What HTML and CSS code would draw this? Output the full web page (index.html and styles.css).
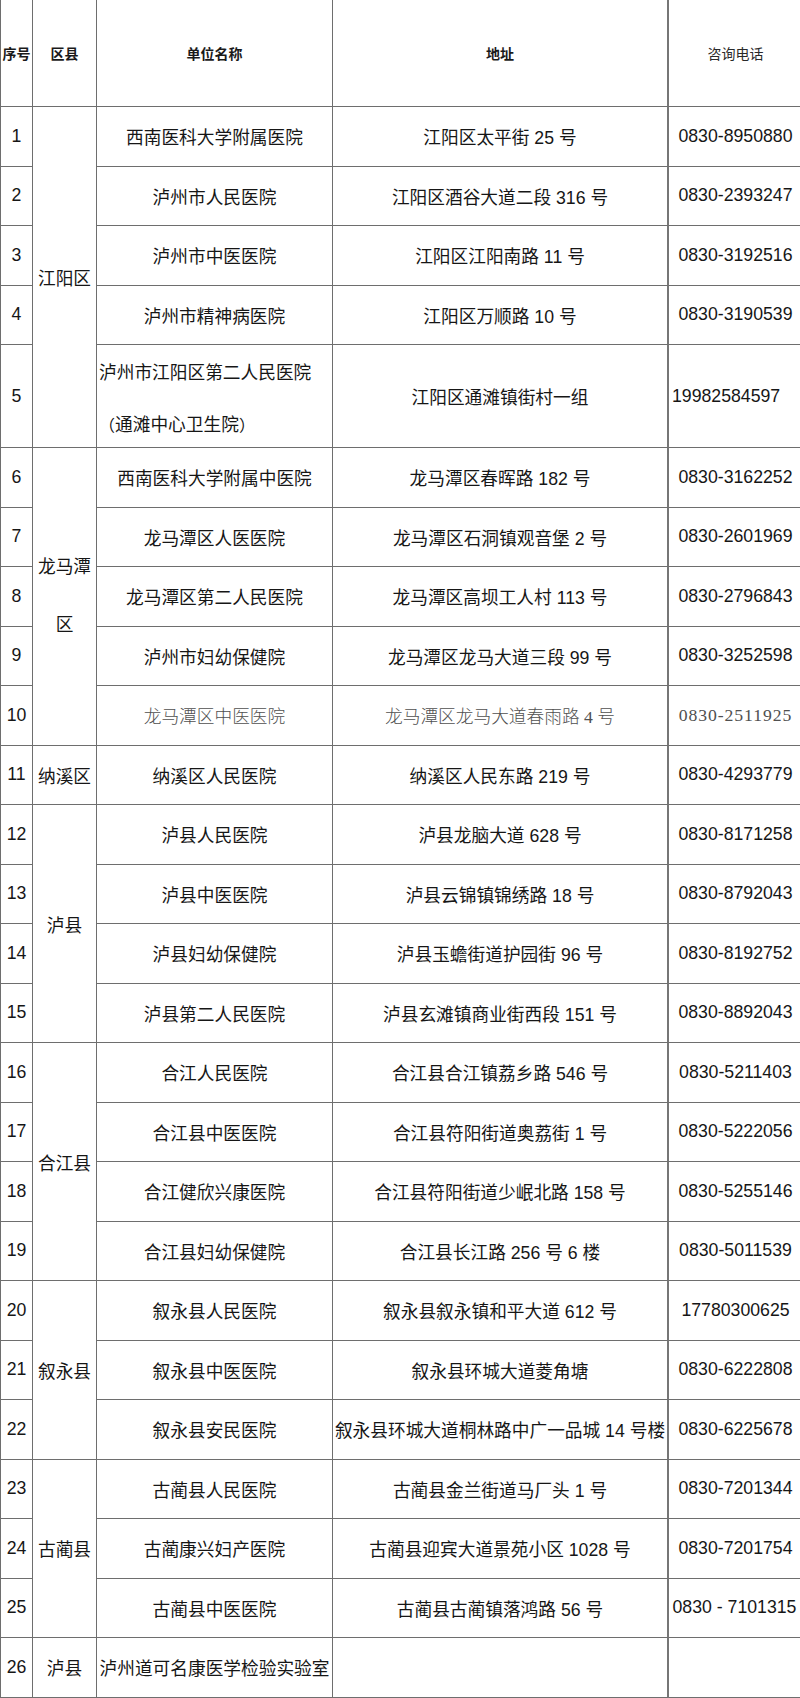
FILE: index.html
```html
<!DOCTYPE html>
<html lang="zh-CN">
<head>
<meta charset="utf-8">
<title>泸州市医疗机构名单</title>
<link rel="stylesheet" href="styles.css">
</head>
<body>
<div class="sheet">
  <div class="cell num head">序号</div>
  <div class="cell dist head">区县</div>
  <div class="cell name head">单位名称</div>
  <div class="cell addr head">地址</div>
  <div class="cell tel head light">咨询电话</div>

  <div class="cell num">1</div>
  <div class="cell dist span5">江阳区</div>
  <div class="cell name">西南医科大学附属医院</div>
  <div class="cell addr">江阳区太平街 25 号</div>
  <div class="cell tel">0830-8950880</div>

  <div class="cell num">2</div>
  <div class="cell name">泸州市人民医院</div>
  <div class="cell addr">江阳区酒谷大道二段 316 号</div>
  <div class="cell tel">0830-2393247</div>

  <div class="cell num">3</div>
  <div class="cell name">泸州市中医医院</div>
  <div class="cell addr">江阳区江阳南路 11 号</div>
  <div class="cell tel">0830-3192516</div>

  <div class="cell num">4</div>
  <div class="cell name">泸州市精神病医院</div>
  <div class="cell addr">江阳区万顺路 10 号</div>
  <div class="cell tel">0830-3190539</div>

  <div class="cell num">5</div>
  <div class="cell name twoline"><span>泸州市江阳区第二人民医院</span><span><span class="paren">（</span>通滩中心卫生院<span class="paren">）</span></span></div>
  <div class="cell addr">江阳区通滩镇街村一组</div>
  <div class="cell tel tel-left">19982584597</div>

  <div class="cell num">6</div>
  <div class="cell dist span5 wrap"><span>龙马潭</span><span>区</span></div>
  <div class="cell name">西南医科大学附属中医院</div>
  <div class="cell addr">龙马潭区春晖路 182 号</div>
  <div class="cell tel">0830-3162252</div>

  <div class="cell num">7</div>
  <div class="cell name">龙马潭区人医医院</div>
  <div class="cell addr">龙马潭区石洞镇观音堡 2 号</div>
  <div class="cell tel">0830-2601969</div>

  <div class="cell num">8</div>
  <div class="cell name">龙马潭区第二人民医院</div>
  <div class="cell addr">龙马潭区高坝工人村 113 号</div>
  <div class="cell tel">0830-2796843</div>

  <div class="cell num">9</div>
  <div class="cell name">泸州市妇幼保健院</div>
  <div class="cell addr">龙马潭区龙马大道三段 99 号</div>
  <div class="cell tel">0830-3252598</div>

  <div class="cell num">10</div>
  <div class="cell name serif">龙马潭区中医医院</div>
  <div class="cell addr serif">龙马潭区龙马大道春雨路 4 号</div>
  <div class="cell tel serif">0830-2511925</div>

  <div class="cell num">11</div>
  <div class="cell dist">纳溪区</div>
  <div class="cell name">纳溪区人民医院</div>
  <div class="cell addr">纳溪区人民东路 219 号</div>
  <div class="cell tel">0830-4293779</div>

  <div class="cell num">12</div>
  <div class="cell dist span4">泸县</div>
  <div class="cell name">泸县人民医院</div>
  <div class="cell addr">泸县龙脑大道 628 号</div>
  <div class="cell tel">0830-8171258</div>

  <div class="cell num">13</div>
  <div class="cell name">泸县中医医院</div>
  <div class="cell addr">泸县云锦镇锦绣路 18 号</div>
  <div class="cell tel">0830-8792043</div>

  <div class="cell num">14</div>
  <div class="cell name">泸县妇幼保健院</div>
  <div class="cell addr">泸县玉蟾街道护园街 96 号</div>
  <div class="cell tel">0830-8192752</div>

  <div class="cell num">15</div>
  <div class="cell name">泸县第二人民医院</div>
  <div class="cell addr">泸县玄滩镇商业街西段 151 号</div>
  <div class="cell tel">0830-8892043</div>

  <div class="cell num">16</div>
  <div class="cell dist span4">合江县</div>
  <div class="cell name">合江人民医院</div>
  <div class="cell addr">合江县合江镇荔乡路 546 号</div>
  <div class="cell tel">0830-5211403</div>

  <div class="cell num">17</div>
  <div class="cell name">合江县中医医院</div>
  <div class="cell addr">合江县符阳街道奥荔街 1 号</div>
  <div class="cell tel">0830-5222056</div>

  <div class="cell num">18</div>
  <div class="cell name">合江健欣兴康医院</div>
  <div class="cell addr">合江县符阳街道少岷北路 158 号</div>
  <div class="cell tel">0830-5255146</div>

  <div class="cell num">19</div>
  <div class="cell name">合江县妇幼保健院</div>
  <div class="cell addr">合江县长江路 256 号 6 楼</div>
  <div class="cell tel">0830-5011539</div>

  <div class="cell num">20</div>
  <div class="cell dist span3">叙永县</div>
  <div class="cell name">叙永县人民医院</div>
  <div class="cell addr">叙永县叙永镇和平大道 612 号</div>
  <div class="cell tel">17780300625</div>

  <div class="cell num">21</div>
  <div class="cell name">叙永县中医医院</div>
  <div class="cell addr">叙永县环城大道菱角塘</div>
  <div class="cell tel">0830-6222808</div>

  <div class="cell num">22</div>
  <div class="cell name">叙永县安民医院</div>
  <div class="cell addr">叙永县环城大道桐林路中广一品城 14 号楼</div>
  <div class="cell tel">0830-6225678</div>

  <div class="cell num">23</div>
  <div class="cell dist span3">古蔺县</div>
  <div class="cell name">古蔺县人民医院</div>
  <div class="cell addr">古蔺县金兰街道马厂头 1 号</div>
  <div class="cell tel">0830-7201344</div>

  <div class="cell num">24</div>
  <div class="cell name">古蔺康兴妇产医院</div>
  <div class="cell addr">古蔺县迎宾大道景苑小区 1028 号</div>
  <div class="cell tel">0830-7201754</div>

  <div class="cell num">25</div>
  <div class="cell name">古蔺县中医医院</div>
  <div class="cell addr">古蔺县古蔺镇落鸿路 56 号</div>
  <div class="cell tel tel-wide">0830 - 7101315</div>

  <div class="cell num">26</div>
  <div class="cell dist">泸县</div>
  <div class="cell name">泸州道可名康医学检验实验室</div>
  <div class="cell addr"></div>
  <div class="cell tel"></div>
</div>
</body>
</html>
```

FILE: styles.css
```css
html, body {
  margin: 0;
  padding: 0;
  background: #ffffff;
}

body {
  width: 800px;
  font-family: "Liberation Sans", "Noto Sans CJK SC", sans-serif;
  font-size: 17.7px;
  color: #161616;
}

.sheet {
  display: grid;
  grid-template-columns: 33px 64px 236px 336px 131px;
  grid-template-rows: 107px repeat(4, 59.5px) 103px repeat(21, 59.5px);
  width: 800px;
}

.cell {
  box-sizing: border-box;
  display: flex;
  align-items: center;
  justify-content: center;
  text-align: center;
  white-space: nowrap;
  border-right: 1px solid #6e6e6e;
  border-bottom: 1px solid #6e6e6e;
  overflow: visible;
}

.num {
  border-left: 1px solid #6e6e6e;
}

.addr {
  border-right: 2px solid #767676;
}

.tel {
  border-right: none;
  padding-left: 2px;
}

.head {
  font-family: "Noto Sans CJK SC", sans-serif;
  font-size: 14px;
  font-weight: 700;
  color: #1a1a1a;
}

.head.light {
  font-weight: 400;
  color: #2a2a2a;
}

.span5 { grid-row: span 5; }
.span4 { grid-row: span 4; }
.span3 { grid-row: span 3; }

.wrap {
  flex-direction: column;
  line-height: 58px;
}

.twoline {
  flex-direction: column;
  align-items: flex-start;
  justify-content: flex-start;
  line-height: 52px;
  padding-top: 2px;
  padding-left: 2px;
  text-align: left;
}

.paren {
  display: inline-block;
  width: 1em;
  text-align: center;
  font-family: "Liberation Sans", sans-serif;
  font-size: 16px;
}

.tel-left {
  justify-content: flex-start;
  padding-left: 3px;
}

.tel-wide {
  padding-left: 0;
}

.serif {
  font-family: "Liberation Serif", "Noto Sans CJK SC", serif;
  font-weight: 300;
  color: #505050;
}

.tel.serif {
  letter-spacing: 0.9px;
}
```
